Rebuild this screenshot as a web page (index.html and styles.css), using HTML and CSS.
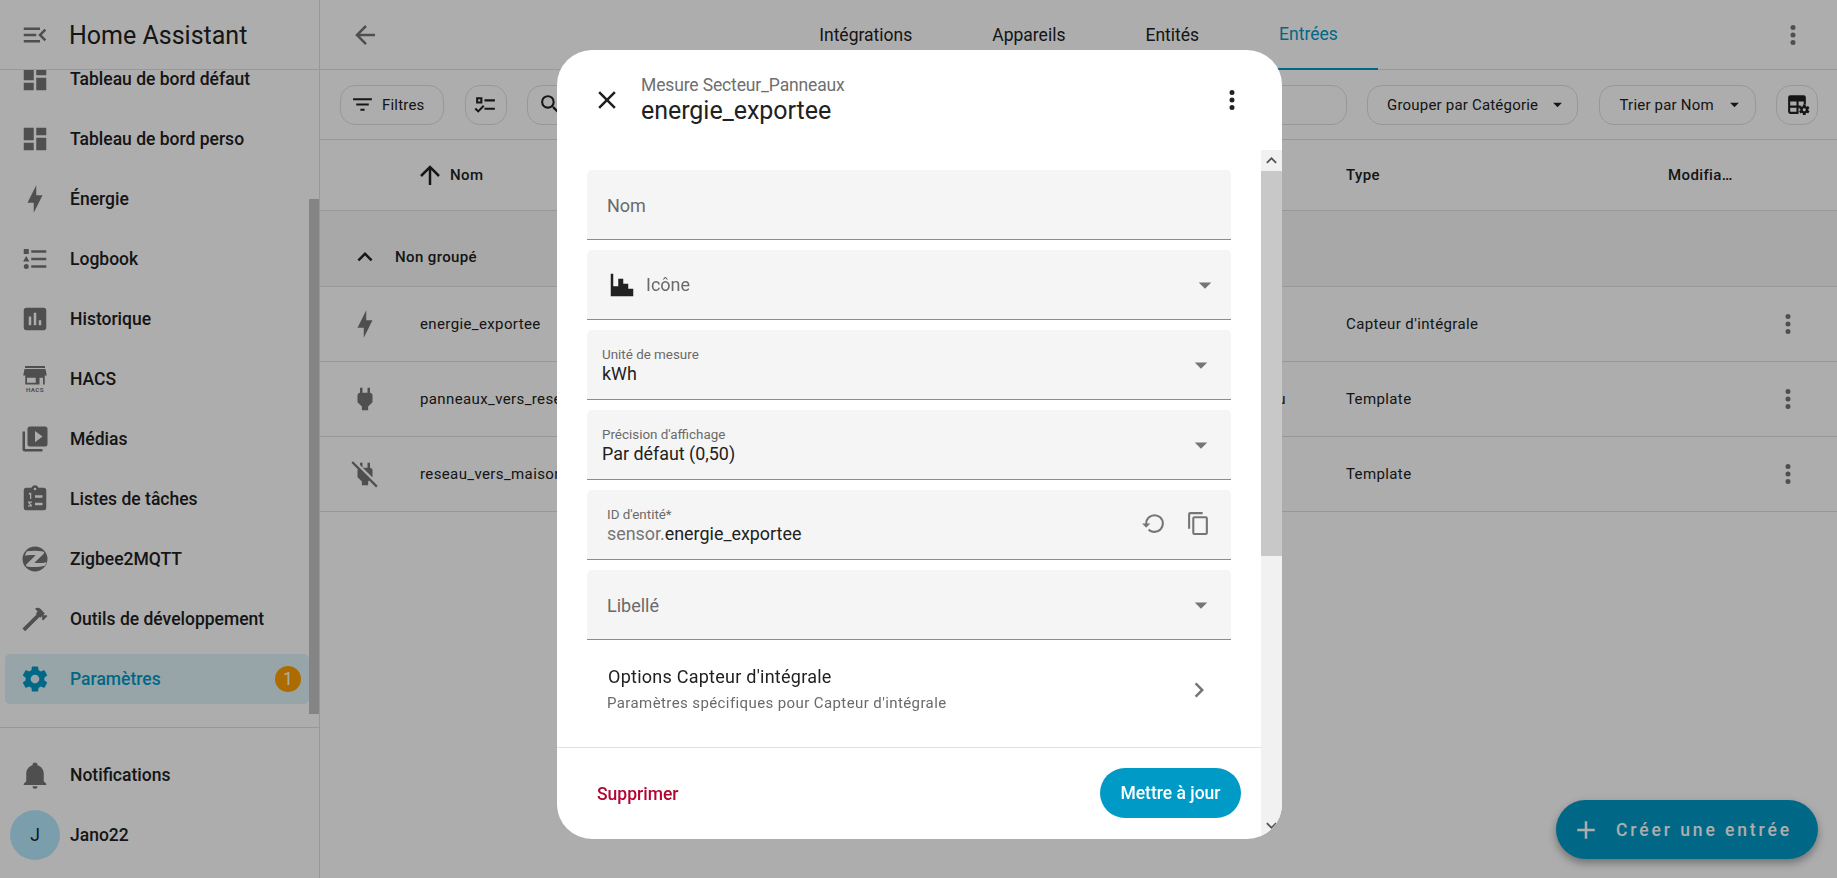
FILE: index.html
```html
<!DOCTYPE html>
<html lang="fr">
<head>
<meta charset="utf-8">
<title>Home Assistant</title>
<link rel="stylesheet" href="styles.css">
</head>
<body>
<div class="app">
  <aside class="sidebar">
    <div class="side-head">
      <svg class="ic" viewBox="0 0 24 24"><path d="M21,15.61L19.59,17L14.58,12L19.59,7L21,8.39L17.44,12L21,15.61M3,6H16V8H3V6M3,13V11H13V13H3M3,18V16H16V18H3Z"/></svg>
      <span class="side-title">Home Assistant</span>
    </div>
    <nav class="nav">
      <div class="nav-list">
        <a class="item"><svg class="ic" viewBox="0 0 24 24"><path d="M13,3V9H21V3M13,21H21V11H13M3,21H11V15H3M3,13H11V3H3V13Z"/></svg><span>Tableau de bord défaut</span></a>
        <a class="item"><svg class="ic" viewBox="0 0 24 24"><path d="M13,3V9H21V3M13,21H21V11H13M3,21H11V15H3M3,13H11V3H3V13Z"/></svg><span>Tableau de bord perso</span></a>
        <a class="item"><svg class="ic" viewBox="0 0 24 24"><path d="M11 15H6L13 1V9H18L11 23V15Z"/></svg><span>Énergie</span></a>
        <a class="item"><svg class="ic" viewBox="0 0 24 24"><path d="M5,9.5L7.5,14H2.5L5,9.5M3,4H7V8H3V4M5,20A2,2 0 0,0 7,18A2,2 0 0,0 5,16A2,2 0 0,0 3,18A2,2 0 0,0 5,20M9,5V7H21V5H9M9,19H21V17H9V19M9,13H21V11H9V13Z"/></svg><span>Logbook</span></a>
        <a class="item"><svg class="ic" viewBox="0 0 24 24"><path d="M19 3H5C3.9 3 3 3.9 3 5V19C3 20.1 3.9 21 5 21H19C20.1 21 21 20.1 21 19V5C21 3.9 20.1 3 19 3M9 17H7V10H9V17M13 17H11V7H13V17M17 17H15V13H17V17Z"/></svg><span>Historique</span></a>
        <a class="item"><svg class="ic" viewBox="0 0 24 24"><path fill-rule="evenodd" d="M4 1.6H20V3.2H4ZM3.6 4H20.4L21.4 9.2H2.6ZM4.2 9.2H19.8V16.4H4.2ZM5.6 11V15H12.6V11ZM15.6 11V16.4H18.4V11Z"/><text class="hacs" x="12" y="22.6" text-anchor="middle">HACS</text></svg><span>HACS</span></a>
        <a class="item"><svg class="ic" viewBox="0 0 24 24"><path fill-rule="evenodd" d="M4,6H2V20A2,2 0 0,0 4,22H18V20H4V6ZM8,2H20A2,2 0 0,1 22,4V16A2,2 0 0,1 20,18H8A2,2 0 0,1 6,16V4A2,2 0 0,1 8,2ZM12,5.5V14.5L18,10Z"/></svg><span>Médias</span></a>
        <a class="item"><svg class="ic" viewBox="0 0 24 24"><path fill-rule="evenodd" d="M19,3H14.82C14.4,1.84 13.3,1 12,1C10.7,1 9.6,1.84 9.18,3H5A2,2 0 0,0 3,5V19A2,2 0 0,0 5,21H19A2,2 0 0,0 21,19V5A2,2 0 0,0 19,3ZM12,3A1,1 0 0,1 13,4A1,1 0 0,1 12,5A1,1 0 0,1 11,4A1,1 0 0,1 12,3ZM12,9H18V11H12ZM12,15H18V17H12ZM7.5,7H9V12H8V8.2L7,8.6V7.7ZM6.5,14H9.5V15H7.8L9.5,17V18H6.5V17H8.2L6.5,15Z"/></svg><span>Listes de tâches</span></a>
        <a class="item"><svg class="ic" viewBox="0 0 24 24"><path fill-rule="evenodd" d="M12,2A10,10 0 1,1 12,22A10,10 0 1,1 12,2ZM5.5,5.8C9.5,5.2 14.5,5.2 18.5,6C19.4,6.3 19.5,7.2 18.8,7.9L11.5,15C14.5,15.4 18,15.2 21.4,14.5L20,17.4C15.5,18.6 10,18.8 5.6,18C4.7,17.8 4.5,16.9 5.2,16.2L12.5,9C9.5,8.6 6.5,8.7 3.8,9.2Z"/></svg><span>Zigbee2MQTT</span></a>
        <a class="item"><svg class="ic" viewBox="0 0 24 24"><path d="M2 19.63L13.43 8.2L12.72 7.5L14.14 6.07L12 3.89C13.2 2.7 15.09 2.7 16.27 3.89L19.87 7.5L18.45 8.91H21.29L22 9.62L18.45 13.21L17.74 12.5V9.62L16.27 11.04L15.56 10.33L4.13 21.76L2 19.63Z"/></svg><span>Outils de développement</span></a>
        <a class="item active"><svg class="ic" viewBox="0 0 24 24"><path d="M12,15.5A3.5,3.5 0 0,1 8.5,12A3.5,3.5 0 0,1 12,8.5A3.5,3.5 0 0,1 15.5,12A3.5,3.5 0 0,1 12,15.5M19.43,12.97C19.47,12.65 19.5,12.33 19.5,12C19.5,11.67 19.47,11.34 19.43,11L21.54,9.37C21.73,9.22 21.78,8.95 21.66,8.73L19.66,5.27C19.54,5.05 19.27,4.96 19.05,5.05L16.56,6.05C16.04,5.66 15.5,5.32 14.87,5.07L14.5,2.42C14.46,2.18 14.25,2 14,2H10C9.75,2 9.54,2.18 9.5,2.42L9.13,5.07C8.5,5.32 7.96,5.66 7.44,6.05L4.95,5.05C4.73,4.96 4.46,5.05 4.34,5.27L2.34,8.73C2.21,8.95 2.27,9.22 2.46,9.37L4.57,11C4.53,11.34 4.5,11.67 4.5,12C4.5,12.33 4.53,12.65 4.57,12.97L2.46,14.63C2.27,14.78 2.21,15.05 2.34,15.27L4.34,18.73C4.46,18.95 4.73,19.03 4.95,18.95L7.44,17.94C7.96,18.34 8.5,18.68 9.13,18.93L9.5,21.58C9.54,21.82 9.75,22 10,22H14C14.25,22 14.46,21.82 14.5,21.58L14.87,18.93C15.5,18.67 16.04,18.34 16.56,17.94L19.05,18.95C19.27,19.03 19.54,18.95 19.66,18.73L21.66,15.27C21.78,15.05 21.73,14.78 21.54,14.63L19.43,12.97Z"/></svg><span>Paramètres</span><b class="badge">1</b></a>
      </div>
      <div class="side-thumb"></div>
    </nav>
    <div class="side-foot">
      <a class="foot-item"><svg class="ic" viewBox="0 0 24 24"><path d="M21,19V20H3V19L5,17V11C5,7.9 7.03,5.17 10,4.29C10,4.19 10,4.1 10,4A2,2 0 0,1 12,2A2,2 0 0,1 14,4C14,4.1 14,4.19 14,4.29C16.97,5.17 19,7.9 19,11V17L21,19M14,21A2,2 0 0,1 12,23A2,2 0 0,1 10,21"/></svg><span>Notifications</span></a>
      <a class="foot-item user"><i class="avatar">J</i><span>Jano22</span></a>
    </div>
  </aside>

  <main class="main">
    <header class="tabs-bar">
      <div class="tabs-left"><svg class="ic" viewBox="0 0 24 24"><path d="M20,11V13H8L13.5,18.5L12.08,19.92L4.16,12L12.08,4.08L13.5,5.5L8,11H20Z"/></svg></div>
      <div class="tabs">
        <span class="tab">Intégrations</span>
        <span class="tab">Appareils</span>
        <span class="tab">Entités</span>
        <span class="tab on">Entrées</span>
      </div>
      <div class="tabs-right"><svg class="ic" viewBox="0 0 24 24"><path d="M12,16A2,2 0 0,1 14,18A2,2 0 0,1 12,20A2,2 0 0,1 10,18A2,2 0 0,1 12,16M12,10A2,2 0 0,1 14,12A2,2 0 0,1 12,14A2,2 0 0,1 10,12A2,2 0 0,1 12,10M12,4A2,2 0 0,1 14,6A2,2 0 0,1 12,8A2,2 0 0,1 10,6A2,2 0 0,1 12,4Z"/></svg></div>
    </header>

    <div class="toolbar">
      <div class="chip chip-filter"><svg class="ic ic-sm dark" viewBox="0 0 24 24"><path d="M6,13H18V11H6M3,6V8H21V6M10,18H14V16H10V18Z"/></svg><span>Filtres</span></div>
      <div class="chip chip-icon"><svg class="ic ic-sm dark" viewBox="0 0 24 24"><path d="M3,5H9V11H3V5M5,7V9H7V7H5M11,7H21V9H11V7M11,15H21V17H11V15M5,20L1.5,16.5L2.91,15.09L5,17.17L9.59,12.59L11,14L5,20Z"/></svg></div>
      <div class="chip chip-search"><svg class="ic ic-sm dark" viewBox="0 0 24 24"><path d="M9.5,3A6.5,6.5 0 0,1 16,9.5C16,11.11 15.41,12.59 14.44,13.73L14.71,14H15.5L20.5,19L19,20.5L14,15.5V14.71L13.73,14.44C12.59,15.41 11.11,16 9.5,16A6.5,6.5 0 0,1 3,9.5A6.5,6.5 0 0,1 9.5,3M9.5,5C7,5 5,7 5,9.5C5,12 7,14 9.5,14C12,14 14,12 14,9.5C14,7 12,5 9.5,5Z"/></svg></div>
      <div class="chip chip-group"><span>Grouper par Catégorie</span><svg class="ic ic-caret dark" viewBox="0 0 24 24"><path d="M7,10L12,15L17,10H7Z"/></svg></div>
      <div class="chip chip-sort"><span>Trier par Nom</span><svg class="ic ic-caret dark" viewBox="0 0 24 24"><path d="M7,10L12,15L17,10H7Z"/></svg></div>
      <div class="chip chip-icon"><svg class="ic ic-sm dark" viewBox="0 0 24 24"><path fill-rule="evenodd" d="M5 3H18A2 2 0 0 1 20 5V12H18V9H13V13H15V15H13V21H5A2 2 0 0 1 3 19V5A2 2 0 0 1 5 3ZM5 9V13H11V9ZM5 15V19H11V15Z"/><path d="M17.5 12C17.37 12 17.24 12.11 17.22 12.24L17.03 13.56C16.73 13.69 16.44 13.86 16.18 14.05L14.94 13.55C14.83 13.55 14.7 13.55 14.63 13.67L13.63 15.4C13.57 15.5 13.59 15.65 13.69 15.72L14.75 16.55C14.71 16.87 14.71 17.13 14.75 17.45L13.69 18.28C13.6 18.35 13.57 18.5 13.63 18.6L14.63 20.33C14.69 20.45 14.82 20.45 14.94 20.45L16.18 19.95C16.44 20.14 16.72 20.31 17.03 20.44L17.22 21.76C17.24 21.89 17.36 22 17.5 22H19.5C19.63 22 19.75 21.89 19.77 21.76L19.96 20.44C20.26 20.31 20.54 20.14 20.8 19.95L22.05 20.45C22.17 20.45 22.3 20.45 22.37 20.33L23.37 18.6C23.43 18.5 23.4 18.35 23.31 18.28L22.24 17.45C22.28 17.13 22.28 16.87 22.24 16.55L23.3 15.72C23.39 15.65 23.42 15.5 23.36 15.4L22.36 13.67C22.3 13.55 22.17 13.55 22.05 13.55L20.8 14.05C20.54 13.86 20.26 13.69 19.96 13.56L19.77 12.24C19.75 12.11 19.64 12 19.5 12H17.5M18.5 15.5C19.33 15.5 20 16.17 20 17S19.33 18.5 18.5 18.5C17.66 18.5 17 17.83 17 17S17.66 15.5 18.5 15.5Z"/></svg></div>
    </div>

    <div class="table">
      <div class="grid thead">
        <div></div>
        <div class="th-name"><svg class="ic dark" viewBox="0 0 24 24"><path d="M13,20H11V8L5.5,13.5L4.08,12.08L12,4.16L19.92,12.08L18.5,13.5L13,8V20Z"/></svg><span>Nom</span></div>
        <div>Type</div>
        <div>Modifia…</div>
      </div>
      <div class="group"><svg class="ic dark" viewBox="0 0 24 24"><path d="M7.41,15.41L12,10.83L16.59,15.41L18,14L12,8L6,14L7.41,15.41Z"/></svg><span>Non groupé</span></div>
      <div class="grid row">
        <div class="cell-ic"><svg class="ic" viewBox="0 0 24 24"><path d="M11 15H6L13 1V9H18L11 23V15Z"/></svg></div>
        <div class="cell-name"><span>energie_exportee</span></div>
        <div>Capteur d'intégrale</div>
        <div></div>
        <div class="cell-ic"><svg class="ic" viewBox="0 0 24 24"><path d="M12,16A2,2 0 0,1 14,18A2,2 0 0,1 12,20A2,2 0 0,1 10,18A2,2 0 0,1 12,16M12,10A2,2 0 0,1 14,12A2,2 0 0,1 12,14A2,2 0 0,1 10,12A2,2 0 0,1 12,10M12,4A2,2 0 0,1 14,6A2,2 0 0,1 12,8A2,2 0 0,1 10,6A2,2 0 0,1 12,4Z"/></svg></div>
      </div>
      <div class="grid row">
        <div class="cell-ic"><svg class="ic" viewBox="0 0 24 24"><path d="M16,7V3H14V7H10V3H8V7C7,7 6,8 6,9V14.5L9.5,18V21H14.5V18L18,14.5V9C18,8 17,7 16,7Z"/></svg></div>
        <div class="cell-name"><span>panneaux_vers_reseau</span><span>Panneau</span></div>
        <div>Template</div>
        <div></div>
        <div class="cell-ic"><svg class="ic" viewBox="0 0 24 24"><path d="M12,16A2,2 0 0,1 14,18A2,2 0 0,1 12,20A2,2 0 0,1 10,18A2,2 0 0,1 12,16M12,10A2,2 0 0,1 14,12A2,2 0 0,1 12,14A2,2 0 0,1 10,12A2,2 0 0,1 12,10M12,4A2,2 0 0,1 14,6A2,2 0 0,1 12,8A2,2 0 0,1 10,6A2,2 0 0,1 12,4Z"/></svg></div>
      </div>
      <div class="grid row">
        <div class="cell-ic"><svg class="ic" viewBox="0 0 24 24"><path d="M22.11 21.46L2.39 1.73L1.11 3L6.25 8.14C6.09 8.41 6 8.7 6 9V14.5L9.5 18V21H14.5V18L15.31 17.2L20.84 22.73L22.11 21.46M18 14.5V9C18 8 17 7 16 7V3H14V7H10.2L17.85 14.65L18 14.5M10 3H8V4.8L10 6.8V3Z"/></svg></div>
        <div class="cell-name"><span>reseau_vers_maison</span></div>
        <div>Template</div>
        <div></div>
        <div class="cell-ic"><svg class="ic" viewBox="0 0 24 24"><path d="M12,16A2,2 0 0,1 14,18A2,2 0 0,1 12,20A2,2 0 0,1 10,18A2,2 0 0,1 12,16M12,10A2,2 0 0,1 14,12A2,2 0 0,1 12,14A2,2 0 0,1 10,12A2,2 0 0,1 12,10M12,4A2,2 0 0,1 14,6A2,2 0 0,1 12,8A2,2 0 0,1 10,6A2,2 0 0,1 12,4Z"/></svg></div>
      </div>
    </div>

    <div class="fab"><svg class="ic" viewBox="0 0 24 24"><path d="M19,13H13V19H11V13H5V11H11V5H13V11H19V13Z"/></svg><span>Créer une entrée</span></div>
  </main>
</div>

<div class="scrim"></div>

<section class="dialog">
  <header class="dlg-head">
    <svg class="ic dark" viewBox="0 0 24 24"><path d="M19,6.41L17.59,5L12,10.59L6.41,5L5,6.41L10.59,12L5,17.59L6.41,19L12,13.41L17.59,19L19,17.59L13.41,12L19,6.41Z"/></svg>
    <div class="dlg-titles">
      <div class="dlg-sub">Mesure Secteur_Panneaux</div>
      <div class="dlg-title">energie_exportee</div>
    </div>
    <svg class="ic dark" viewBox="0 0 24 24"><path d="M12,16A2,2 0 0,1 14,18A2,2 0 0,1 12,20A2,2 0 0,1 10,18A2,2 0 0,1 12,16M12,10A2,2 0 0,1 14,12A2,2 0 0,1 12,14A2,2 0 0,1 10,12A2,2 0 0,1 12,10M12,4A2,2 0 0,1 14,6A2,2 0 0,1 12,8A2,2 0 0,1 10,6A2,2 0 0,1 12,4Z"/></svg>
  </header>
  <div class="dlg-body">
    <div class="dlg-col">
      <div class="dlg-content">
        <div class="field plain"><span class="ph">Nom</span></div>
        <div class="field plain icon-field">
          <svg class="ic dark" viewBox="0 0 24 24"><path d="M3,3H5V13H9V7H13V11H17V15H21V21H3V3Z"/></svg>
          <span class="ph">Icône</span>
          <svg class="ic caret" viewBox="0 0 24 24"><path d="M7,10L12,15L17,10H7Z"/></svg>
        </div>
        <div class="field stacked">
          <div class="stack"><div class="lbl">Unité de mesure</div><div class="val">kWh</div></div>
          <svg class="ic caret" viewBox="0 0 24 24"><path d="M7,10L12,15L17,10H7Z"/></svg>
        </div>
        <div class="field stacked">
          <div class="stack"><div class="lbl">Précision d'affichage</div><div class="val">Par défaut (0,50)</div></div>
          <svg class="ic caret" viewBox="0 0 24 24"><path d="M7,10L12,15L17,10H7Z"/></svg>
        </div>
        <div class="field stacked id-field">
          <div class="stack"><div class="lbl">ID d'entité*</div><div class="val"><span class="pre">sensor.</span>energie_exportee</div></div>
          <svg class="ic ic-25" viewBox="0 0 24 24"><path d="M13,3A9,9 0 0,0 4,12H1L4.89,15.89L4.96,16.03L9,12H6A7,7 0 0,1 13,5A7,7 0 0,1 20,12A7,7 0 0,1 13,19C11.07,19 9.32,18.21 8.06,16.94L6.64,18.36C8.27,20 10.5,21 13,21A9,9 0 0,0 22,12A9,9 0 0,0 13,3Z"/></svg>
          <svg class="ic ic-25" viewBox="0 0 24 24"><path d="M19,21H8V7H19M19,5H8A2,2 0 0,0 6,7V21A2,2 0 0,0 8,23H19A2,2 0 0,0 21,21V7A2,2 0 0,0 19,5M16,1H4A2,2 0 0,0 2,3V17H4V3H16V1Z"/></svg>
        </div>
        <div class="field plain">
          <span class="ph">Libellé</span>
          <svg class="ic caret" viewBox="0 0 24 24"><path d="M7,10L12,15L17,10H7Z"/></svg>
        </div>
        <div class="options">
          <div>
            <div class="opt-title">Options Capteur d'intégrale</div>
            <div class="opt-sub">Paramètres spécifiques pour Capteur d'intégrale</div>
          </div>
          <svg class="ic" viewBox="0 0 24 24"><path d="M8.59,16.58L13.17,12L8.59,7.41L10,6L16,12L10,18L8.59,16.58Z"/></svg>
        </div>
      </div>
      <footer class="dlg-foot">
        <span class="danger">Supprimer</span>
        <span class="primary-btn">Mettre à jour</span>
      </footer>
    </div>
    <div class="fake-bar">
      <div class="bar-btn"><svg viewBox="0 0 24 24"><path d="M7.41,15.41L12,10.83L16.59,15.41L18,14L12,8L6,14L7.41,15.41Z"/></svg></div>
      <div class="bar-thumb"></div>
      <div class="bar-rest"><svg viewBox="0 0 24 24"><path d="M7.41,8.59L12,13.17L16.59,8.59L18,10L12,16L6,10L7.41,8.59Z"/></svg></div>
    </div>
  </div>
</section>
</body>
</html>
```
FILE: styles.css
```css
* { box-sizing: border-box; }
html, body { margin: 0; height: 100%; overflow: hidden; }
body { font-family: Roboto, "Liberation Sans", sans-serif; color: #212121; background: #fff; }

.app { display: flex; height: 878px; position: relative; }

.ic { width: 30px; height: 30px; fill: #757575; flex: none; display: block; }
.ic.dark { fill: #212121; }
.ic-sm { width: 25px; height: 25px; }
.ic-25 { width: 25px; height: 25px; }
.ic-caret { width: 21px; height: 21px; }
.hacs { font: 700 5px Roboto, sans-serif; letter-spacing: .3px; fill: #757575; }

/* sidebar */
.sidebar { width: 320px; flex: none; border-right: 1px solid #e0e0e0; display: flex; flex-direction: column; }
.side-head { height: 70px; flex: none; border-bottom: 1px solid #e0e0e0; display: flex; align-items: center; padding: 1px 0 0 20px; gap: 19px; }
.side-title { font-size: 25px; color: #212121; }
.nav { height: 657px; flex: none; overflow: hidden; position: relative; }
.nav-list { margin-top: -21px; }
.item { height: 50px; margin: 5px 10px 10px 5px; border-radius: 5px; display: flex; align-items: center; padding-left: 15px; gap: 20px; font-size: 17.5px; font-weight: 500; position: relative; }
.item.active { background: rgba(0, 154, 199, .12); color: #009ac7; }
.item.active .ic { fill: #009ac7; }
.badge { position: absolute; left: 270px; top: 12px; width: 26px; height: 26px; border-radius: 50%; background: #ff9f00; color: #fff; font-size: 17.5px; font-weight: 400; display: flex; align-items: center; justify-content: center; }
.side-thumb { position: absolute; left: 309px; top: 129px; width: 10px; height: 515px; background: #c4c4c4; }
.side-foot { flex: 1; border-top: 1px solid #e0e0e0; padding-top: 17px; }
.foot-item { height: 60px; display: flex; align-items: center; padding-left: 20px; gap: 20px; font-size: 17.5px; font-weight: 500; }
.foot-item.user { padding-left: 10px; gap: 10px; }
.avatar { width: 50px; height: 50px; border-radius: 50%; background: #b6e9ff; font-style: normal; font-weight: 400; display: flex; align-items: center; justify-content: center; font-size: 17.5px; flex: none; }

/* main */
.main { flex: 1; min-width: 0; display: flex; flex-direction: column; position: relative; }
.tabs-bar { height: 70px; flex: none; border-bottom: 1px solid #e0e0e0; display: grid; grid-template-columns: 1fr auto 1fr; align-items: stretch; }
.tabs-left { display: flex; align-items: center; padding-left: 30px; }
.tabs-right { display: flex; align-items: center; justify-content: flex-end; padding-right: 29px; }
.tabs { display: flex; }
.tab { padding: 0 40px; font-size: 17.5px; display: flex; align-items: center; height: 70px; }
.tab.on { color: #009ac7; border-bottom: 2.5px solid #009ac7; }

.toolbar { height: 70px; flex: none; border-bottom: 1px solid #e0e0e0; display: flex; align-items: center; gap: 20.5px; padding: 0 19px 0 20px; }
.chip { height: 40px; border: 1px solid #e0e0e0; border-radius: 15px; display: flex; align-items: center; font-size: 15px; letter-spacing: .2px; flex: none; }
.chip-filter { width: 104px; padding-left: 9px; gap: 7px; }
.chip-icon { width: 42px; justify-content: center; }
.chip-search { flex: 1; padding-left: 10px; }
.chip-group { width: 211px; padding-left: 19px; justify-content: space-between; padding-right: 9px; }
.chip-sort { width: 157px; padding-left: 20px; justify-content: space-between; padding-right: 10px; }

.table { font-size: 15px; letter-spacing: .38px; }
.grid { display: grid; grid-template-columns: 100px 926px 322px 95px 50px 24px; align-items: center; }
.thead { height: 71px; border-bottom: 1px solid #e0e0e0; font-weight: 500; }
.th-name { display: flex; align-items: center; gap: 5px; margin-left: -5px; }
.group { height: 76px; background: #f8f8f8; border-bottom: 1px solid #e0e0e0; display: flex; align-items: center; font-weight: 500; padding-left: 30px; gap: 15px; padding-top: 17px; }
.row { height: 75px; border-bottom: 1px solid #e0e0e0; }
.row > div { white-space: nowrap; }
.cell-ic { display: flex; justify-content: center; }
.cell-ic:first-child { justify-content: flex-start; padding-left: 30px; }
.cell-name { display: flex; justify-content: space-between; padding-right: 60px; }

.fab { position: absolute; right: 19px; bottom: 19px; width: 262px; height: 59px; border-radius: 30px; background: #009ac7; color: #fff; display: flex; align-items: center; padding-left: 15px; gap: 15px; font-size: 17.5px; font-weight: 500; letter-spacing: 2.9px; box-shadow: 0 4px 8px rgba(0, 0, 0, .35); }
.fab .ic { fill: #fff; }

.scrim { position: fixed; inset: 0; background: rgba(0, 0, 0, .32); z-index: 10; }

/* dialog */
.dialog { position: absolute; z-index: 11; left: 557px; top: 50px; width: 725px; height: 789px; background: #fff; border-radius: 35px; overflow: hidden; display: flex; flex-direction: column; }
.dlg-head { height: 100px; flex: none; display: flex; align-items: center; padding: 0 35px; gap: 19px; }
.dlg-titles { flex: 1; padding-bottom: 4px; }
.dlg-sub { font-size: 17.5px; line-height: 25px; color: #6f6f6f; letter-spacing: -.14px; }
.dlg-title { font-size: 25px; line-height: 25px; color: #212121; letter-spacing: -.05px; }
.dlg-body { flex: 1; min-height: 0; display: flex; }
.dlg-col { flex: 1; min-width: 0; display: flex; flex-direction: column; }
.dlg-content { flex: 1; padding: 20px 30px 0; display: flex; flex-direction: column; gap: 10px; border-bottom: 1px solid #e0e0e0; }

.field { height: 70px; flex: none; background: #f5f5f5; border-radius: 5px 5px 0 0; border-bottom: 1.25px solid #8c8c8c; display: flex; align-items: center; position: relative; }
.plain { padding: 1px 15px 0 20px; }
.ph { font-size: 18px; color: #6a6a6a; flex: 1; }
.icon-field { padding: 0 11px 0 20px; }
.icon-field .ph { margin-left: 9px; }
.stacked { padding: 0 15px; align-items: flex-start; }
.stack { flex: 1; padding-top: 16px; }
.lbl { font-size: 13.4px; line-height: 18px; color: #6a6a6a; }
.val { font-size: 17.9px; line-height: 20px; color: #212121; }
.pre { color: #757575; }
.caret { align-self: center; }
.id-field { padding: 0 20px 0 20px; }
.id-field .ic { align-self: center; margin-left: 20px; margin-top: -3px; }
.options { flex: 1; display: flex; align-items: center; justify-content: space-between; padding: 0 17px 8px 20px; margin-top: -10px; }
.opt-title { font-size: 18px; line-height: 22px; letter-spacing: .25px; padding-left: 1px; }
.opt-sub { font-size: 15px; line-height: 20px; margin-top: 5px; color: #6a6a6a; letter-spacing: .4px; }
.dlg-foot { height: 91px; flex: none; display: flex; align-items: center; justify-content: space-between; padding: 0 20px 2px 40px; }
.danger { font-size: 17.5px; font-weight: 500; color: #b30532; padding-top: 2px; }
.primary-btn { width: 141px; height: 50px; border-radius: 25px; background: #009ac7; color: #fff; font-size: 17.5px; font-weight: 500; display: flex; align-items: center; justify-content: center; }

.fake-bar { width: 21px; flex: none; display: flex; flex-direction: column; background: #f1f1f1; }
.bar-btn { height: 21px; display: flex; align-items: center; justify-content: center; }
.fake-bar svg { width: 21px; height: 21px; fill: #505050; }
.bar-thumb { height: 385px; background: #c8c8c8; }
.bar-rest { flex: 1; display: flex; align-items: flex-end; justify-content: center; padding-bottom: 3px; }
```
